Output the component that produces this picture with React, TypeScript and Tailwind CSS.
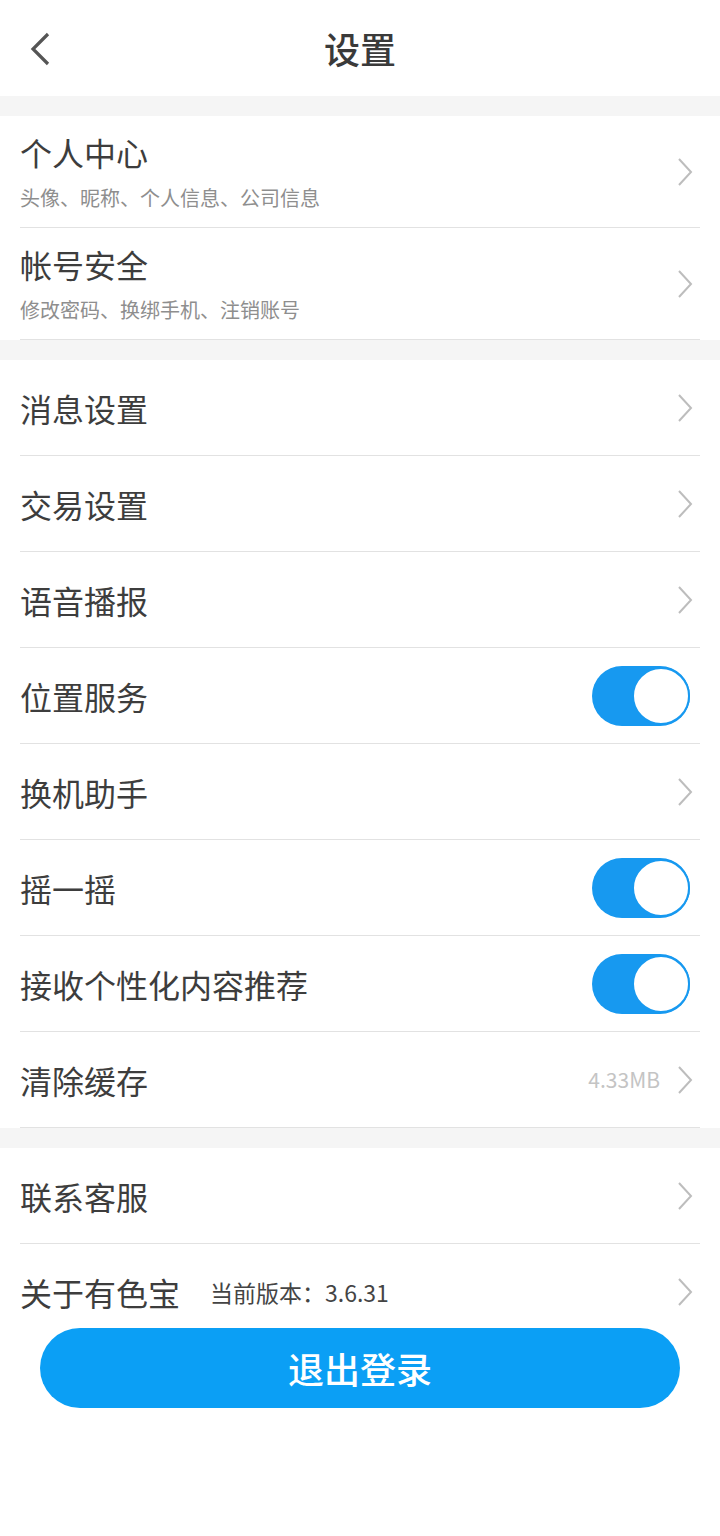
import React from "react";

const FONT = { fontFamily: '"Noto Sans CJK SC", "Noto Sans", sans-serif' };

function Chevron() {
  return (
    <svg width="18" height="30" viewBox="0 0 18 30" className="shrink-0">
      <path d="M3 2 L15 15 L3 28" fill="none" stroke="#bdbdbd" strokeWidth="2" />
    </svg>
  );
}

function Toggle() {
  return (
    <div className="w-[98px] h-[60px] rounded-full bg-[#1799f0] flex items-center justify-end">
      <div className="w-[58px] h-[58px] rounded-full bg-white border-2 border-[#1799f0]" />
    </div>
  );
}

function Gap() {
  return <div className="h-[20px] bg-[#f5f5f5]" />;
}

interface Item {
  label: string;
  toggle?: boolean;
  extra?: string;
}

const ITEMS: Item[] = [
  { label: "消息设置" },
  { label: "交易设置" },
  { label: "语音播报" },
  { label: "位置服务", toggle: true },
  { label: "换机助手" },
  { label: "摇一摇", toggle: true },
  { label: "接收个性化内容推荐", toggle: true },
  { label: "清除缓存", extra: "4.33MB" },
];

function Row({ item }: { item: Item }) {
  return (
    <div className="mx-[20px] h-[96px] border-b border-[#e2e2e2] flex items-center justify-between">
      <span className="text-[32px] leading-[40px] text-[#3d3d3d]">{item.label}</span>
      {item.toggle ? (
        <div className="mr-[10px]">
          <Toggle />
        </div>
      ) : (
        <div className="flex items-center gap-[16px] mr-[6px]">
          {item.extra && <span className="text-[21px] text-[#c4c4c4]">{item.extra}</span>}
          <Chevron />
        </div>
      )}
    </div>
  );
}

function SubRow({ title, sub }: { title: string; sub: string }) {
  return (
    <div className="mx-[20px] h-[112px] border-b border-[#e2e2e2] flex items-center justify-between">
      <div className="flex flex-col">
        <span className="text-[32px] leading-[36px] text-[#3d3d3d]">{title}</span>
        <span className="text-[20px] leading-[24px] text-[#8e8e8e] mt-[16px]">{sub}</span>
      </div>
      <div className="mr-[6px]">
        <Chevron />
      </div>
    </div>
  );
}

export default function App() {
  return (
    <div className="w-[720px] min-h-[1536px] bg-white" style={FONT}>
      {/* header */}
      <div className="h-[96px] flex items-center relative">
        <div className="absolute left-[28px] top-[32px]">
          <svg width="26" height="34" viewBox="0 0 26 34">
            <path d="M20 2 L5 17 L20 32" fill="none" stroke="#555" strokeWidth="3.2" />
          </svg>
        </div>
        <div className="flex-1 text-center text-[36px] font-medium text-[#3a3a3a]">设置</div>
      </div>
      <Gap />

      <SubRow title="个人中心" sub="头像、昵称、个人信息、公司信息" />
      <SubRow title="帐号安全" sub="修改密码、换绑手机、注销账号" />
      <Gap />

      {ITEMS.map((it) => (
        <Row key={it.label} item={it} />
      ))}
      <Gap />

      <Row item={{ label: "联系客服" }} />
      <div className="mx-[20px] h-[96px] flex items-center justify-between">
        <div className="flex items-center gap-[30px]">
          <span className="text-[32px] leading-[40px] text-[#3d3d3d]">关于有色宝</span>
          <span className="text-[23px] text-[#444]">当前版本：3.6.31</span>
        </div>
        <div className="mr-[6px]">
          <Chevron />
        </div>
      </div>

      <div className="-mt-[12px] mx-[40px] h-[80px] rounded-full bg-[#0b9ff5] flex items-center justify-center relative">
        <span className="text-white text-[36px] font-medium">退出登录</span>
      </div>
    </div>
  );
}
